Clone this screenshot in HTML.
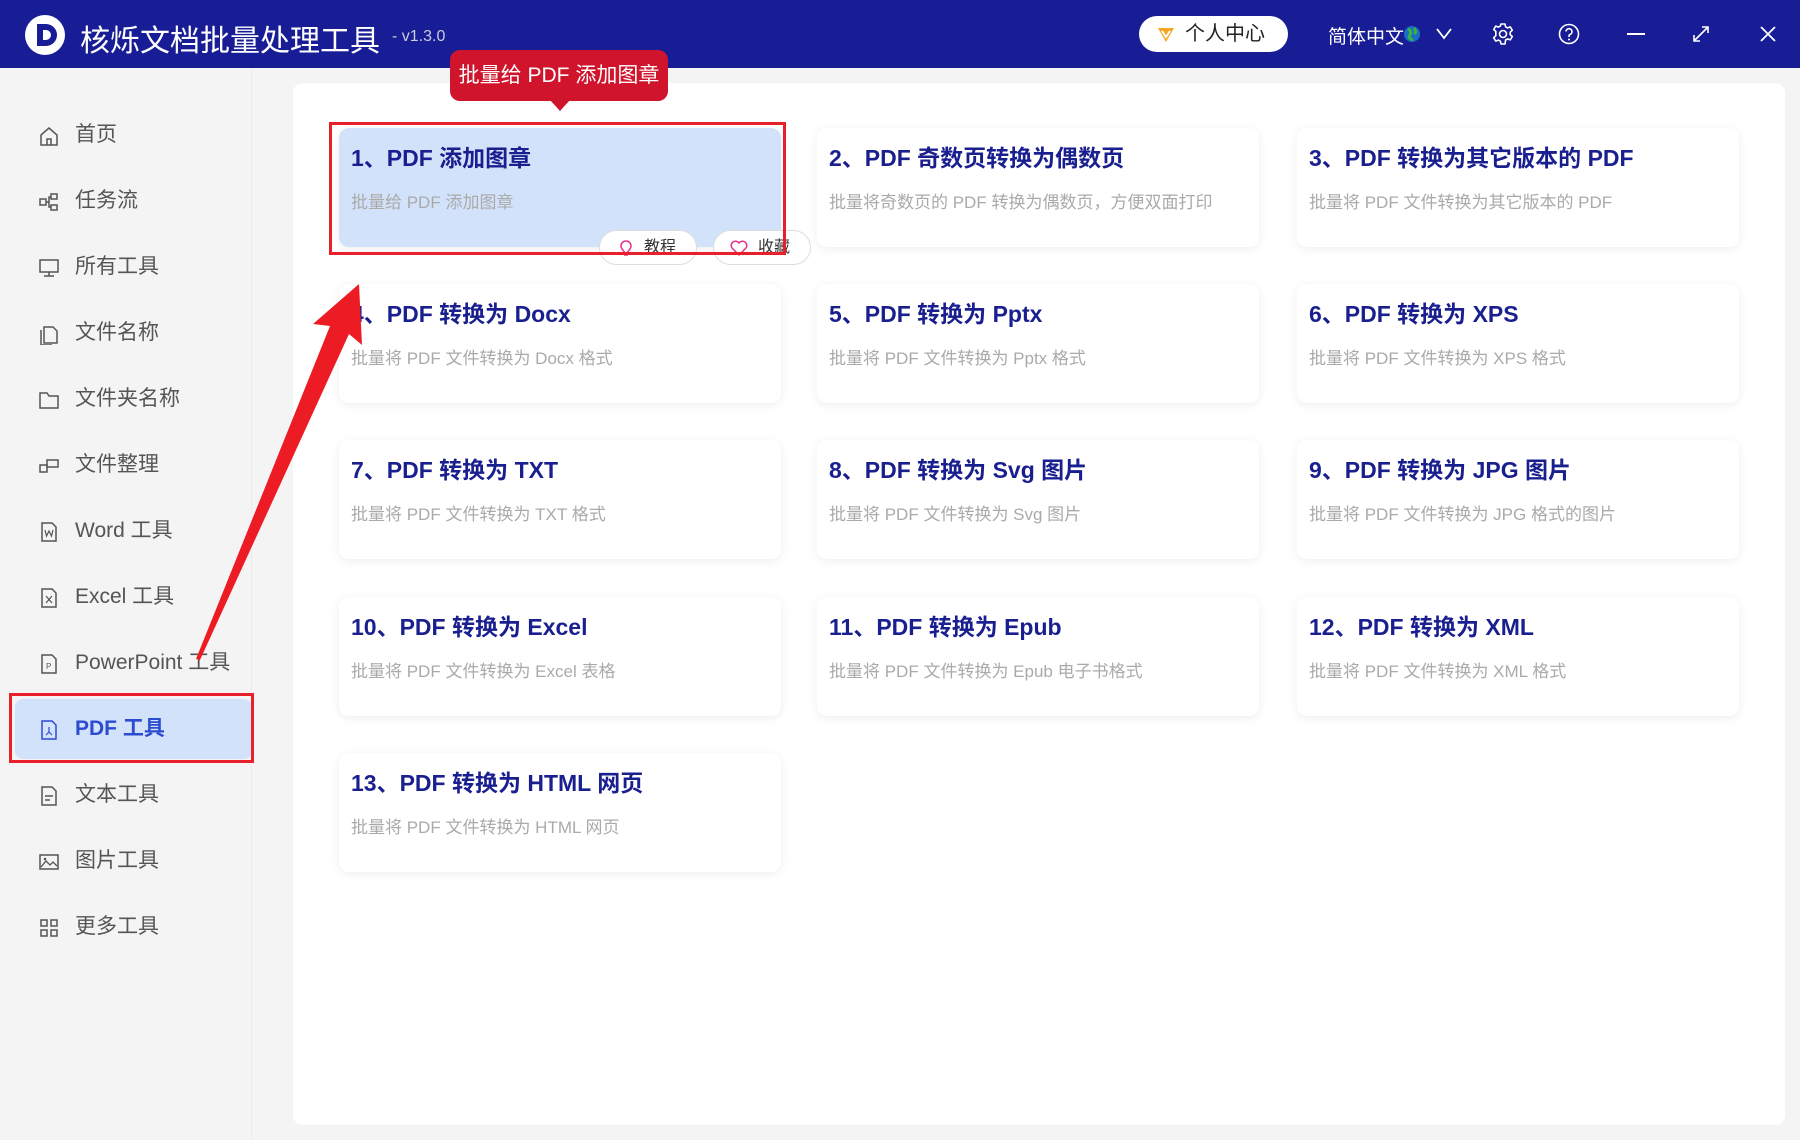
<!DOCTYPE html>
<html><head><meta charset="utf-8"><style>
*{margin:0;padding:0;box-sizing:border-box}
body{width:1800px;height:1140px;overflow:hidden;background:#f4f4f4;font-family:"Liberation Sans","Noto Sans CJK SC",sans-serif;position:relative}
.hdr{position:absolute;left:0;top:0;width:1800px;height:68px;background:#181d96;color:#fff}
.side{position:absolute;left:0;top:68px;width:252px;height:1072px;background:#f4f4f4;border-right:1px solid #ececec}
.si{position:absolute;left:0;height:40px;line-height:40px;font-size:21px;color:#555;width:252px}
.si svg{position:absolute;left:38px;top:10px}
.si span{position:absolute;left:75px}
.panel{position:absolute;left:293px;top:83px;width:1492px;height:1042px;background:#fff;border-radius:10px}
.card{position:absolute;width:442px;height:119px;background:#fff;border-radius:10px;box-shadow:0 2px 10px rgba(0,0,0,.07)}
.card .t{position:absolute;left:12px;top:11px;font-size:23px;font-weight:bold;color:#1a1f8f;white-space:nowrap}
.card .d{position:absolute;left:12px;top:60px;font-size:17px;color:#aaa;white-space:nowrap}
.btn{position:absolute;top:230px;height:35px;width:98px;border-radius:18px;background:#fff;border:1px solid #ddd;font-size:16px;color:#333;line-height:33px;padding-left:44px}
</style></head><body>
<div class="hdr">
 <svg style="position:absolute;left:24px;top:14px" width="42" height="42"><circle cx="21" cy="21" r="20" fill="#fff"/><path d="M13 10h9a11 11 0 0 1 0 22h-9z" fill="#181d96"/><path d="M19 16h3a5 5 0 0 1 0 10h-3z" fill="#fff"/></svg>
 <div style="position:absolute;left:80px;top:16px;font-size:30px">核烁文档批量处理工具</div>
 <div style="position:absolute;left:392px;top:28px;font-size:16px;color:#ccd">- v1.3.0</div>
 <div style="position:absolute;left:1139px;top:16px;width:149px;height:36px;background:#fff;border-radius:18px;color:#222;font-size:20px;line-height:36px;padding-left:46px">个人中心</div>
 <svg style="position:absolute;left:1156px;top:26px" width="20" height="18"><path d="M2 2h16l-8 14z" fill="#f5a623"/><path d="M6 5l4 6 4-6" stroke="#fff" stroke-width="2" fill="none"/></svg>
 <div style="position:absolute;left:1328px;top:22px;font-size:19px">简体中文</div>
 <svg style="position:absolute;left:1403px;top:25px" width="18" height="18"><circle cx="9" cy="9" r="8" fill="#1a6fc4"/><path d="M5 4q4 2 2 6t3 5M11 3q3 4 0 6" stroke="#3cb043" stroke-width="3" fill="none"/></svg>
 <svg style="position:absolute;left:1436px;top:28px" width="16" height="12"><path d="M1 1l7 9 7-9" stroke="#fff" stroke-width="1.8" fill="none"/></svg>
 <svg style="position:absolute;left:1491px;top:22px" width="24" height="24" viewBox="0 0 24 24"><path d="M10 2h4l.6 2.8 2 1.1 2.7-1 2 3.4-2.1 1.9v2.4l2.1 1.9-2 3.4-2.7-1-2 1.1L14 22h-4l-.6-2.8-2-1.1-2.7 1-2-3.4 2.1-1.9V9.4L2.7 7.5l2-3.4 2.7 1 2-1.1z" stroke="#fff" stroke-width="1.6" fill="none" stroke-linejoin="round"/><circle cx="12" cy="12" r="3.5" stroke="#fff" stroke-width="1.6" fill="none"/></svg>
 <svg style="position:absolute;left:1558px;top:23px" width="22" height="22"><circle cx="11" cy="11" r="9.5" stroke="#fff" stroke-width="1.6" fill="none"/><path d="M8 8.5a3 3 0 1 1 4 3c-1 .5-1 1-1 2.5" stroke="#fff" stroke-width="1.6" fill="none"/><circle cx="11" cy="16.5" r="1" fill="#fff"/></svg>
 <div style="position:absolute;left:1627px;top:33px;width:18px;height:2px;background:#fff"></div>
 <svg style="position:absolute;left:1692px;top:25px" width="18" height="18"><path d="M2 16L16 2M10 2h6v6M2 10v6h6" stroke="#fff" stroke-width="1.6" fill="none"/></svg>
 <svg style="position:absolute;left:1759px;top:25px" width="18" height="18"><path d="M2 2l14 14M16 2L2 16" stroke="#fff" stroke-width="1.8"/></svg>
</div>
<div class="side">
 <div class="si" style="top:47px"><svg width="22" height="22"><path d="M3 10L11 3l8 7v10H3z M9 20v-6h4v6" stroke="#555" stroke-width="1.5" fill="none"/></svg><span>首页</span></div>
 <div class="si" style="top:113px"><svg width="22" height="22"><rect x="2" y="8" width="6" height="6" stroke="#555" fill="none" stroke-width="1.5"/><rect x="13" y="3" width="6" height="5" stroke="#555" fill="none" stroke-width="1.5"/><rect x="13" y="14" width="6" height="5" stroke="#555" fill="none" stroke-width="1.5"/><path d="M8 11h3v-5h2M11 11v5h2" stroke="#555" fill="none" stroke-width="1.5"/></svg><span>任务流</span></div>
 <div class="si" style="top:179px"><svg width="22" height="22"><rect x="2" y="3" width="18" height="12" stroke="#555" fill="none" stroke-width="1.5"/><path d="M11 15v4M6 19h10" stroke="#555" stroke-width="1.5"/></svg><span>所有工具</span></div>
 <div class="si" style="top:245px"><svg width="22" height="22"><path d="M6 4h9l4 4v12H6z M3 7v15h11" stroke="#555" fill="none" stroke-width="1.5"/></svg><span>文件名称</span></div>
 <div class="si" style="top:311px"><svg width="22" height="22"><path d="M2 4h7l2 3h9v12H2z" stroke="#555" fill="none" stroke-width="1.5"/></svg><span>文件夹名称</span></div>
 <div class="si" style="top:377px"><svg width="22" height="22"><rect x="2" y="10" width="7" height="7" stroke="#555" fill="none" stroke-width="1.5"/><rect x="9" y="5" width="11" height="7" stroke="#555" fill="none" stroke-width="1.5"/></svg><span>文件整理</span></div>
 <div class="si" style="top:443px"><svg width="22" height="22"><path d="M4 2h10l4 4v14H4z" stroke="#555" fill="none" stroke-width="1.5"/><path d="M7 9l1.5 6 2.5-5 2.5 5L15 9" stroke="#555" fill="none" stroke-width="1.2"/></svg><span>Word 工具</span></div>
 <div class="si" style="top:509px"><svg width="22" height="22"><path d="M4 2h10l4 4v14H4z" stroke="#555" fill="none" stroke-width="1.5"/><path d="M8 9l6 7M14 9l-6 7" stroke="#555" stroke-width="1.2"/></svg><span>Excel 工具</span></div>
 <div class="si" style="top:575px"><svg width="22" height="22"><path d="M4 2h10l4 4v14H4z" stroke="#555" fill="none" stroke-width="1.5"/><text x="8" y="16" font-size="8" fill="#555" font-family="Liberation Sans">P</text></svg><span>PowerPoint 工具</span></div>
 <div style="position:absolute;left:15px;top:631px;width:237px;height:60px;background:#d3e2fb;border-radius:8px"></div>
 <div style="position:absolute;left:9px;top:625px;width:245px;height:70px;border:3px solid #e8202a"></div>
 <div class="si" style="top:641px;color:#2b4bd0;font-weight:bold"><svg width="22" height="22"><path d="M4 2h10l4 4v14H4z" stroke="#2b4bd0" fill="none" stroke-width="1.5"/><path d="M11 8v5l-3 3M11 13l3 3" stroke="#2b4bd0" stroke-width="1.2" fill="none"/></svg><span>PDF 工具</span></div>
 <div class="si" style="top:707px"><svg width="22" height="22"><path d="M4 2h10l4 4v14H4z" stroke="#555" fill="none" stroke-width="1.5"/><path d="M7 11h8M7 15h5" stroke="#555" stroke-width="1.5"/></svg><span>文本工具</span></div>
 <div class="si" style="top:773px"><svg width="22" height="22"><rect x="2" y="4" width="18" height="14" stroke="#555" fill="none" stroke-width="1.5"/><path d="M3 16l5-6 4 4 3-3 4 4" stroke="#555" fill="none" stroke-width="1.3"/><circle cx="7" cy="8" r="1.3" fill="#555"/></svg><span>图片工具</span></div>
 <div class="si" style="top:839px"><svg width="22" height="22"><rect x="3" y="3" width="6" height="6" stroke="#555" fill="none" stroke-width="1.5"/><rect x="13" y="3" width="6" height="6" stroke="#555" fill="none" stroke-width="1.5"/><rect x="3" y="13" width="6" height="6" stroke="#555" fill="none" stroke-width="1.5"/><rect x="13" y="13" width="6" height="6" stroke="#555" fill="none" stroke-width="1.5"/></svg><span>更多工具</span></div>
</div>
<div class="panel"></div>
<div class="card" style="left:339px;top:128px;background:#d3e2fb"><div class="t">1、PDF 添加图章</div><div class="d">批量给 PDF 添加图章</div></div>
<div class="card" style="left:817px;top:128px"><div class="t">2、PDF 奇数页转换为偶数页</div><div class="d">批量将奇数页的 PDF 转换为偶数页，方便双面打印</div></div>
<div class="card" style="left:1297px;top:128px"><div class="t">3、PDF 转换为其它版本的 PDF</div><div class="d">批量将 PDF 文件转换为其它版本的 PDF</div></div>
<div class="card" style="left:339px;top:284px"><div class="t">4、PDF 转换为 Docx</div><div class="d">批量将 PDF 文件转换为 Docx 格式</div></div>
<div class="card" style="left:817px;top:284px"><div class="t">5、PDF 转换为 Pptx</div><div class="d">批量将 PDF 文件转换为 Pptx 格式</div></div>
<div class="card" style="left:1297px;top:284px"><div class="t">6、PDF 转换为 XPS</div><div class="d">批量将 PDF 文件转换为 XPS 格式</div></div>
<div class="card" style="left:339px;top:440px"><div class="t">7、PDF 转换为 TXT</div><div class="d">批量将 PDF 文件转换为 TXT 格式</div></div>
<div class="card" style="left:817px;top:440px"><div class="t">8、PDF 转换为 Svg 图片</div><div class="d">批量将 PDF 文件转换为 Svg 图片</div></div>
<div class="card" style="left:1297px;top:440px"><div class="t">9、PDF 转换为 JPG 图片</div><div class="d">批量将 PDF 文件转换为 JPG 格式的图片</div></div>
<div class="card" style="left:339px;top:597px"><div class="t">10、PDF 转换为 Excel</div><div class="d">批量将 PDF 文件转换为 Excel 表格</div></div>
<div class="card" style="left:817px;top:597px"><div class="t">11、PDF 转换为 Epub</div><div class="d">批量将 PDF 文件转换为 Epub 电子书格式</div></div>
<div class="card" style="left:1297px;top:597px"><div class="t">12、PDF 转换为 XML</div><div class="d">批量将 PDF 文件转换为 XML 格式</div></div>
<div class="card" style="left:339px;top:753px"><div class="t">13、PDF 转换为 HTML 网页</div><div class="d">批量将 PDF 文件转换为 HTML 网页</div></div>
<div class="btn" style="left:599px">教程</div>
<svg style="position:absolute;left:618px;top:239px" width="16" height="18"><path d="M8 2a5 5 0 0 1 5 5c0 3-3 5-4 7H7C6 12 3 10 3 7a5 5 0 0 1 5-5zM6 16h4" stroke="#e8308a" stroke-width="1.5" fill="none"/></svg>
<div class="btn" style="left:713px">收藏</div>
<svg style="position:absolute;left:729px;top:239px" width="20" height="18"><path d="M10 16L3 9a4 4 0 0 1 7-5 4 4 0 0 1 7 5z" stroke="#e8308a" stroke-width="1.5" fill="none"/></svg>
<div style="position:absolute;left:329px;top:122px;width:457px;height:133px;border:3px solid #e8202a"></div>
<div style="position:absolute;left:450px;top:50px;width:218px;height:51px;background:#d0142c;border-radius:10px;color:#fff;font-size:21px;line-height:51px;text-align:center">批量给 PDF 添加图章</div>
<div style="position:absolute;left:550px;top:100px;width:0;height:0;border-left:10px solid transparent;border-right:10px solid transparent;border-top:11px solid #d0142c"></div>
<svg style="position:absolute;left:0;top:0" width="1800" height="1140"><polygon points="196,659 330,326 313,324 359,284 362,345 349,334 200,660" fill="#ed1c24"/></svg>
</body></html>
